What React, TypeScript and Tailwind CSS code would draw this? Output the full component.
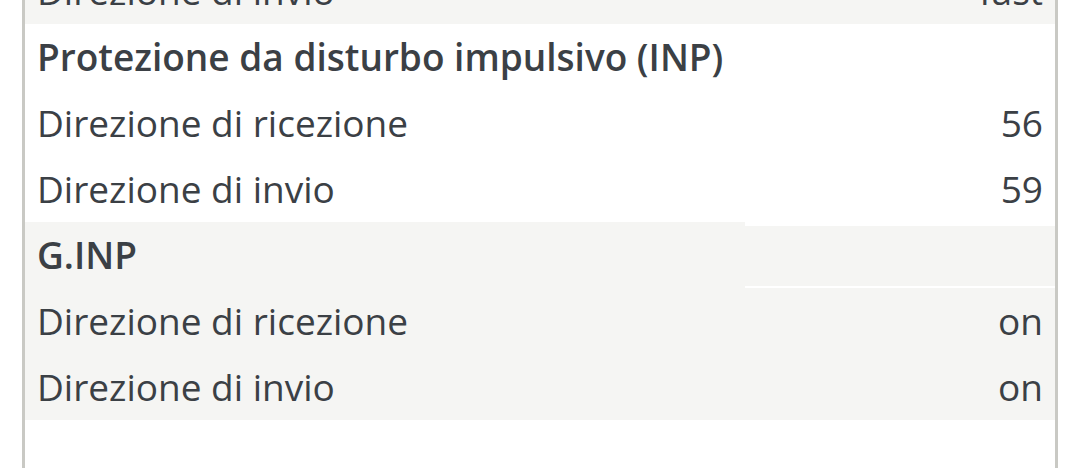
const rows: { label: string; value?: string; head?: boolean; gray?: boolean; split?: boolean }[] = [
  { label: "Direzione di invio", value: "fast", gray: true },
  { label: "Protezione da disturbo impulsivo (INP)", head: true },
  { label: "Direzione di ricezione", value: "56" },
  { label: "Direzione di invio", value: "59" },
  { label: "G.INP", head: true, gray: true, split: true },
  { label: "Direzione di ricezione", value: "on", gray: true },
  { label: "Direzione di invio", value: "on", gray: true },
];

function Row({ label, value, head, gray, split }: (typeof rows)[number]) {
  if (split) {
    return (
      <div className="flex h-[66px]">
        <div className="flex flex-1 items-center bg-[#f5f5f3] px-3">
          <span className="font-semibold">{label}</span>
        </div>
        <div className="mt-[4px] w-[310px] border-b-[2px] border-white bg-[#f5f5f3]" />
      </div>
    );
  }
  return (
    <div className={`flex h-[66px] items-center justify-between px-3 ${gray ? "bg-[#f5f5f3]" : "bg-white"}`}>
      <span className={head ? "font-semibold" : ""}>{label}</span>
      {value && <span>{value}</span>}
    </div>
  );
}

export default function App() {
  return (
    <div className="h-[468px] w-[1080px] overflow-hidden bg-white">
      <div
        className="mx-[22px] -mt-[42px] h-[520px] border-x-[3px] border-[#c9c9c4] text-[37px] text-[#3b4045]"
        style={{ fontFamily: '"Open Sans", "Noto Sans", sans-serif' }}
      >
        {rows.map((r, i) => (
          <Row key={i} {...r} />
        ))}
      </div>
    </div>
  );
}
